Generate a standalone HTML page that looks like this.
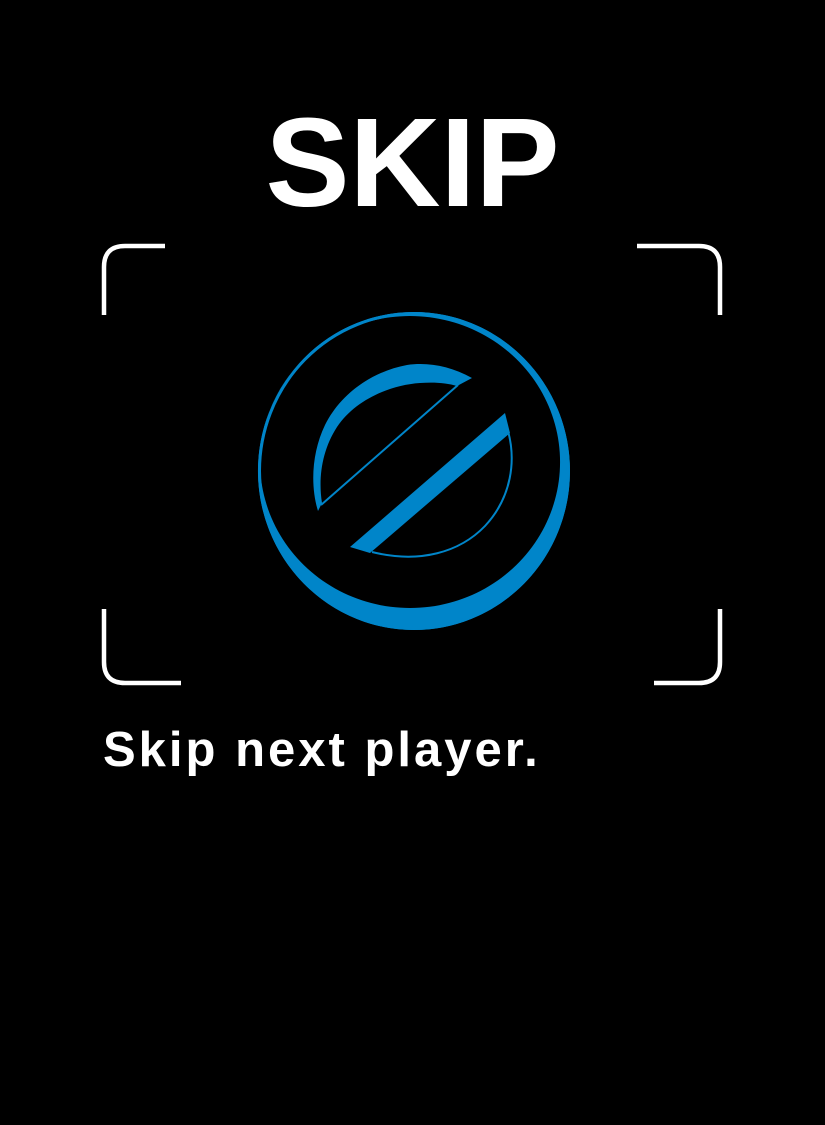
<!DOCTYPE html>
<html><head><style>
html,body{margin:0;padding:0;background:#000;}
body{width:825px;height:1125px;position:relative;overflow:hidden;font-family:"Liberation Sans",Arial,sans-serif;}
.t{position:absolute;left:0;width:825px;text-align:center;top:88px;font-size:126px;font-weight:bold;color:#fff;line-height:150px;}
.s{position:absolute;left:103px;top:722px;font-size:49px;font-weight:bold;color:#fff;letter-spacing:3px;line-height:56px;white-space:nowrap;}
svg{position:absolute;left:0;top:0;}
</style></head><body>
<div class="t">SKIP</div>
<svg width="825" height="1125" viewBox="0 0 825 1125">
<g fill="none" stroke="#fff" stroke-width="4.5" stroke-linecap="butt">
<path d="M165 246 H125 Q104 246 104 267 V315"/>
<path d="M637 246 H699 Q720 246 720 267 V315"/>
<path d="M104 609 V662 Q104 683 125 683 H181"/>
<path d="M720 609 V662 Q720 683 699 683 H654"/>
</g>
<path fill="#0085C9" fill-rule="evenodd" d="M414 312 A156 159 0 1 1 413.9 312 Z M410 316 A150 146 0 1 0 410.1 316 Z"/>
<ellipse cx="414" cy="471" rx="154.5" ry="157.5" fill="none" stroke="#0085C9" stroke-width="3"/>
<path fill="#0085C9" d="M472 378 C450 366 428 362 407 365 C370 372 340 395 325 425 C312 452 310 485 318 511 L322 503 C318 478 322 450 337 427 C355 400 390 385 420 383 C435 382 447 383 457 386 Z"/>
<path fill="none" stroke="#0085C9" stroke-width="2" d="M321 505 L458 385"/>
<path fill="#0085C9" d="M350 547 L505 413 L510 433 L370 553 Z"/>
<path fill="none" stroke="#0085C9" stroke-width="2" d="M508 431 C516 460 512 497 485 526 C460 552 420 564 372 552"/>
</svg>
<div class="s">Skip next player.</div>
</body></html>
